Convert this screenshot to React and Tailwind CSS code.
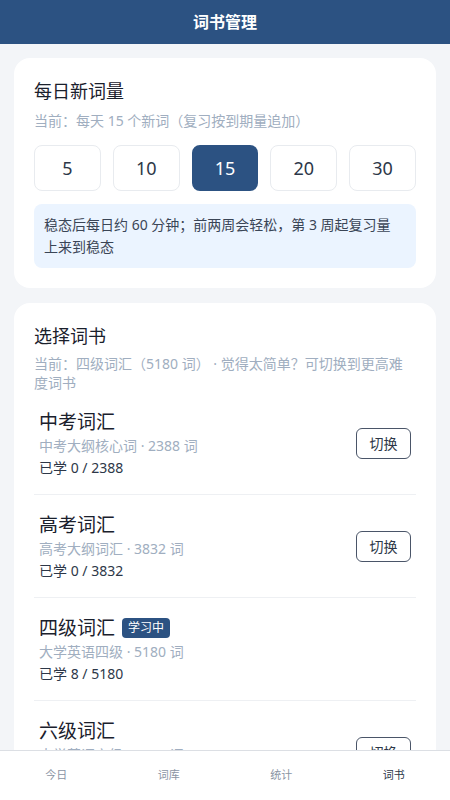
import { useState } from "react";

const counts = [5, 10, 15, 20, 30];

const books = [
  { id: "zk", name: "中考词汇", desc: "中考大纲核心词 · 2388 词", learned: 0, total: 2388 },
  { id: "gk", name: "高考词汇", desc: "高考大纲词汇 · 3832 词", learned: 0, total: 3832 },
  { id: "cet4", name: "四级词汇", desc: "大学英语四级 · 5180 词", learned: 8, total: 5180 },
  { id: "cet6", name: "六级词汇", desc: "大学英语六级 · 2085 词", learned: 0, total: 2085 },
];

const tabs = ["今日", "词库", "统计", "词书"];

export default function App() {
  const [daily, setDaily] = useState(15);
  const [current, setCurrent] = useState("cet4");

  return (
    <div
      className="min-h-screen bg-[#f3f5f8] pb-[64px] text-[#1a202c]"
      style={{ fontFamily: '"Noto Sans", "Noto Sans CJK SC", sans-serif' }}
    >
      <header className="flex h-[44px] items-center justify-center bg-[#2c5282]">
        <h1 className="text-[16px] font-bold text-white">词书管理</h1>
      </header>

      <section className="mx-[14px] mt-[14px] rounded-[16px] bg-white p-5">
        <h2 className="text-[18px] leading-[26px]">每日新词量</h2>
        <p className="mt-[7px] text-[14px] leading-[20px] text-[#a0aec0]">
          当前：每天 {daily} 个新词（复习按到期量追加）
        </p>
        <div className="mt-[14px] grid grid-cols-5 gap-3">
          {counts.map((n) => (
            <button
              key={n}
              onClick={() => setDaily(n)}
              className={`h-[46px] rounded-[8px] text-[18px] ${
                n === daily
                  ? "bg-[#2c5282] text-white"
                  : "border border-[#e8ebef] bg-white text-[#2d3748]"
              }`}
            >
              {n}
            </button>
          ))}
        </div>
        <div className="mt-[13px] rounded-[8px] bg-[#ebf4ff] py-[10px] pl-[10px] pr-[18px] text-[14px] leading-[22px] text-[#3a4556]">
          稳态后每日约 60 分钟；前两周会轻松，第 3 周起复习量上来到稳态
        </div>
      </section>

      <section className="mx-[14px] mt-[15px] rounded-[16px] bg-white px-5 pt-5 pb-2">
        <h2 className="text-[18px] leading-[26px]">选择词书</h2>
        <p className="mt-[5px] text-[14px] leading-[19px] text-[#a0aec0]">
          当前：四级词汇（5180 词） · 觉得太简单？可切换到更高难度词书
        </p>
        <ul>
          {books.map((b, i) => (
            <li
              key={b.id}
              className={`flex items-center justify-between px-[5px] py-4 ${
                i < books.length - 1 ? "border-b border-[#eef0f3]" : ""
              }`}
            >
              <div>
                <div className="flex items-center">
                  <span className="text-[19px] leading-[28px]">{b.name}</span>
                  {b.id === current && (
                    <span className="ml-[7px] rounded-[4px] bg-[#2c5282] px-[6px] text-[12px] leading-[20px] text-white">
                      学习中
                    </span>
                  )}
                </div>
                <p className="text-[14px] leading-[20px] text-[#a0aec0]">{b.desc}</p>
                <p className="mt-[2px] text-[14px] leading-[20px] text-[#2d3748]">
                  已学 {b.learned} / {b.total}
                </p>
              </div>
              {b.id !== current && (
                <button
                  onClick={() => setCurrent(b.id)}
                  className="h-[31px] w-[55px] rounded-[6px] border border-[#4a5568] text-[14px] text-[#2d3748]"
                >
                  切换
                </button>
              )}
            </li>
          ))}
        </ul>
      </section>

      <nav className="fixed inset-x-0 bottom-0 grid h-[50px] grid-cols-4 border-t border-[#dcdfe4] bg-white">
        {tabs.map((t) => (
          <button
            key={t}
            className={`text-[11px] ${t === "词书" ? "text-[#2d3748]" : "text-[#8a94a3]"}`}
          >
            {t}
          </button>
        ))}
      </nav>
    </div>
  );
}
